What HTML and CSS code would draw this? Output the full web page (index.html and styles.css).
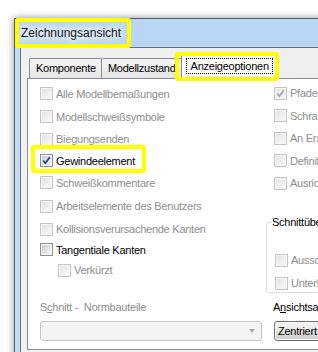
FILE: index.html
```html
<!DOCTYPE html>
<html lang="de">
<head>
    <meta charset="UTF-8">
    <meta name="viewport" content="width=device-width, initial-scale=1.0">
    <title>Zeichnungsansicht</title>
    <link rel="stylesheet" href="styles.css">
</head>
<body>
    <div class="window">
        <div class="titlebar"><span class="caption">Zeichnungsansicht</span></div>
        <div class="client">
            <!-- Registerkarten -->
            <div class="tabs">
                <div class="tab">Komponente</div>
                <div class="tab">Modellzustand</div>
                <div class="tab tab-active"><span class="focus">Anzeigeoptionen</span></div>
            </div>

            <div class="panel">
                <!-- linke Spalte -->
                <div class="col-left">
                    <div class="check-list">
                        <div class="check disabled"><span class="cb"></span>Alle Modellbemaßungen</div>
                        <div class="check disabled"><span class="cb"></span>Modellschweißsymbole</div>
                        <div class="check disabled"><span class="cb"></span>Biegungsenden</div>
                        <div class="check"><span class="cb"><svg width="9" height="9" viewBox="0 0 9 9"><path d="M1.2 4.6 L3.4 7.2 L7.8 1.2" fill="none" stroke="#243f7e" stroke-width="1.7"/></svg></span>Gewindeelement</div>
                        <div class="check disabled"><span class="cb"></span>Schweißkommentare</div>
                        <div class="check disabled"><span class="cb"></span>Arbeitselemente des Benutzers</div>
                        <div class="check disabled"><span class="cb"></span>Kollisionsverursachende Kanten</div>
                        <div class="check"><span class="cb"></span>Tangentiale Kanten</div>
                        <div class="check disabled indent"><span class="cb"></span>Verkürzt</div>
                    </div>
                    <div class="field disabled">
                        <div class="field-label">S<u>c</u>hnitt -&nbsp; Normbauteile</div>
                        <div class="combo"><span class="combo-arrow"></span></div>
                    </div>
                </div>

                <!-- rechte Spalte -->
                <div class="col-right">
                    <div class="check-list check-list-right">
                        <div class="check disabled"><span class="cb"><svg width="9" height="9" viewBox="0 0 9 9"><path d="M1.2 4.6 L3.4 7.2 L7.8 1.2" fill="none" stroke="#a6a6a6" stroke-width="1.7"/></svg></span>Pfade</div>
                        <div class="check disabled"><span class="cb"></span>Schraffur</div>
                        <div class="check disabled"><span class="cb"></span>An Ersatzmodell</div>
                        <div class="check disabled"><span class="cb"></span>Definition</div>
                        <div class="check disabled"><span class="cb"></span>Ausrichtung</div>
                    </div>
                    <div class="group">
                        <div class="group-title">Schnittübernahme</div>
                        <div class="group-body">
                            <div class="check disabled"><span class="cb"></span>Ausschnitt</div>
                            <div class="check disabled"><span class="cb"></span>Unterlegt</div>
                        </div>
                    </div>
                    <div class="field field-right">
                        <div class="field-label">A<u>n</u>sichtsausrichtung</div>
                        <div class="dropdown">Zentriert</div>
                    </div>
                </div>
            </div>
        </div>
    </div>

    <!-- gelbe Markierungen -->
    <div class="mark mark-title"></div>
    <div class="mark mark-tab"></div>
    <div class="mark mark-check"></div>
</body>
</html>
```

FILE: styles.css
```css
* {
    box-sizing: border-box;
}
body {
    margin: 0;
    width: 318px;
    height: 352px;
    overflow: hidden;
    background-color: #ffffff;
    font-family: "Liberation Sans", Arial, sans-serif;
    font-size: 11px;
    letter-spacing: -0.25px;
    color: #000000;
}
.window {
    width: 360px;
    height: 360px;
    margin: 18px 0 0 14px;
    border: 1px solid #4e5d6e;
    background-color: #c3dbf3;
    box-shadow: 0 0 7px rgba(0, 0, 0, 0.45);
    overflow: hidden;
}
.titlebar {
    height: 28px;
    padding-left: 6px;
    line-height: 28px;
    font-size: 12px;
    letter-spacing: 0;
    background-color: #b9d7f4;
}
.caption {
    color: #111111;
    text-shadow: 0 0 6px #ffffff, 0 0 8px #ffffff, 0 0 10px #ffffff, 0 0 12px #ffffff;
}
.client {
    height: 330px;
    margin-left: 5px;
    padding: 6px 0 0 6px;
    border-top: 1px solid #5f7184;
    border-left: 1px solid #5f7184;
    background-color: #f0f0f0;
}

/* Registerkarten */
.tabs {
    display: flex;
    align-items: flex-end;
    height: 24px;
    margin-left: 2px;
}
.tab {
    height: 20px;
    padding: 0 5px 0 6px;
    margin-right: -1px;
    border: 1px solid #898c95;
    border-bottom: none;
    border-radius: 2px 2px 0 0;
    background: linear-gradient(#f4f4f4, #e6e6e6);
    line-height: 19px;
    white-space: nowrap;
}
.tab-active {
    position: relative;
    z-index: 1;
    height: 25px;
    margin: 0 0 -1px 0;
    padding: 3px 3px 0 4px;
    background: #ffffff;
}
.focus {
    display: block;
    padding: 0 3px 0 4px;
    border: 1px dotted #000000;
    line-height: 14px;
}
.panel {
    display: flex;
    gap: 4px;
    height: 272px;
    padding: 3px 0 8px 12px;
    border: 1px solid #898c95;
    background-color: #ffffff;
}
.col-left {
    display: flex;
    flex-direction: column;
    flex: none;
    width: 222px;
}
.col-right {
    display: flex;
    flex-direction: column;
    flex: none;
    width: 200px;
}

/* Kontrollkästchen */
.check-list {
    display: grid;
    grid-template-rows: 23px 23px 22px 21px 23px 24px 22px 19px 22px;
}
.check-list-right {
    grid-template-rows: repeat(5, 22.5px);
    padding-left: 8px;
}
.check {
    display: flex;
    align-items: center;
    gap: 3px;
    white-space: nowrap;
}
.check.indent {
    padding-left: 18px;
}
.cb {
    display: flex;
    flex: none;
    width: 13px;
    height: 13px;
    padding: 1px;
    border: 1px solid #8e8f8f;
    background: linear-gradient(135deg, #c8ccd2, #f5f5f5) content-box, #fcfcfc;
}
.disabled {
    color: #8d8d8d;
}
.disabled .cb {
    border-color: #c4c4c4;
    background: linear-gradient(135deg, #e4e4e4, #f8f8f8) content-box, #f6f6f6;
}

/* Gruppenfeld */
.group {
    height: 71px;
    margin-top: 27px;
    border: 1px solid #d5dfe5;
    border-radius: 3px;
}
.group-title {
    width: fit-content;
    margin: -8px 0 0 4px;
    padding: 0 1px;
    line-height: 15px;
    background-color: #ffffff;
    white-space: nowrap;
}
.group-body {
    display: flex;
    flex-direction: column;
    gap: 10px;
    margin-top: 24px;
    padding-left: 8px;
}
.group-body .check {
    height: 13px;
}

/* Felder unten */
.field {
    margin-top: auto;
}
.field-label {
    line-height: 15px;
    margin-bottom: 6px;
    white-space: nowrap;
}
.field-right .field-label {
    margin-left: 7px;
}
.combo {
    position: relative;
    height: 20px;
    border: 1px solid #c3c7cb;
    border-radius: 3px;
    background-color: #f4f4f4;
}
.combo-arrow {
    position: absolute;
    right: 6px;
    top: 7px;
    border-left: 3.5px solid transparent;
    border-right: 3.5px solid transparent;
    border-top: 4px solid #a8a8a8;
}
.dropdown {
    width: 110px;
    height: 20px;
    margin-left: 8px;
    padding-left: 3px;
    border: 1px solid #707070;
    border-radius: 3px;
    background: linear-gradient(#f2f2f2, #ebebeb 50%, #dddddd 50%, #cfcfcf);
    box-shadow: inset 0 0 0 1px #fafafa;
    line-height: 18px;
    white-space: nowrap;
}

/* gelbe Markierungen */
.mark {
    position: absolute;
    z-index: 5;
    border: 4px solid #ffff00;
    border-radius: 3px;
}
.mark-title {
    left: 15px;
    top: 18px;
    width: 116px;
    height: 30px;
}
.mark-tab {
    left: 175px;
    top: 52px;
    width: 104px;
    height: 29px;
}
.mark-check {
    left: 31px;
    top: 145px;
    width: 115px;
    height: 28px;
}
```
